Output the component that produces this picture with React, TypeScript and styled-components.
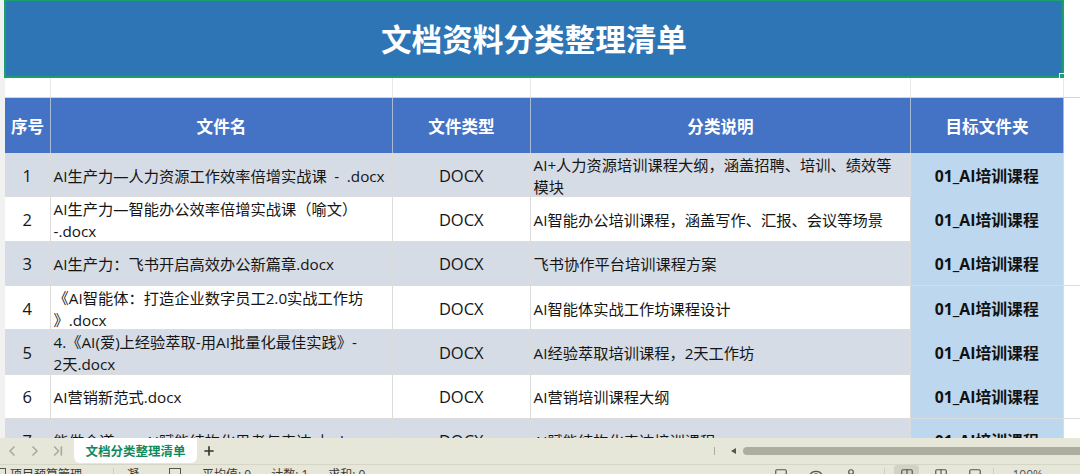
import styled, { createGlobalStyle } from 'styled-components';
import { ChevronLast, ChevronLeft, ChevronRight, Columns2, Eye, Plus, Square, User } from 'lucide-react';

type RowProps = {
  $shade?: boolean;
};
type CellProps = {
  $center?: boolean;
};

const GlobalStyle = createGlobalStyle`
  html, body {
    margin: 0;
    padding: 0;
    background: #fff;
  }
  body {
    font-family: "Open Sans", "Noto Sans CJK SC", sans-serif;
  }
`;

const COLUMNS = '46px 342px 138px 380px 153px 1fr';

const Page = styled.div`
  width: 1080px;
  height: 474px;
  display: flex;
  flex-direction: column;
  overflow: hidden;
`;
const Sheet = styled.div`
  flex: 1;
  min-height: 0;
  overflow: hidden;
  padding-left: 5px;
  background: #f1f1f1;
`;
const TitleRow = styled.div`
  height: 78px;
  margin-left: -1px;
  display: flex;
  background: #fff;
`;
const TitleCell = styled.div`
  position: relative;
  width: 1060px;
  box-sizing: border-box;
  border: 2px solid #18a06e;
  border-top-width: 1.5px;
  background: #2e75b6;
  color: #fff;
  font-size: 30.6px;
  font-weight: 700;
  display: flex;
  align-items: center;
  justify-content: center;
  padding-bottom: 1px;
`;
const Handle = styled.span`
  position: absolute;
  right: -3px;
  bottom: -3px;
  width: 4px;
  height: 4px;
  background: #18a06e;
  border: 1px solid #fff;
`;
const Row = styled.div<RowProps>`
  display: grid;
  grid-template-columns: ${COLUMNS};
  height: 44.35px;
  box-sizing: border-box;
  border-bottom: 1px solid #dcdcdc;
  background: ${({ $shade }) => ($shade ? '#d6dce5' : '#fff')};
`;
const SpacerRow = styled(Row)`
  height: 20px;
  background: #fff;
  border-bottom: 1px solid #d4d4d4;
`;
const HeadRow = styled(Row)`
  height: 55px;
  background: #4472c4;
  border-bottom: 0;
`;
const SpacerCell = styled.div`
  border-right: 1px solid #e8e8e8;
`;
const HeadCell = styled.div`
  display: flex;
  align-items: center;
  justify-content: center;
  color: #fff;
  font-size: 16.6px;
  font-weight: 700;
  border-right: 1.5px solid #a9b9d8;
  white-space: nowrap;
`;
const Cell = styled.div<CellProps>`
  display: flex;
  align-items: center;
  box-sizing: border-box;
  justify-content: ${({ $center }) => ($center ? 'center' : 'flex-start')};
  text-align: ${({ $center }) => ($center ? 'center' : 'left')};
  padding: 1px 3px 0 2.5px;
  color: #151515;
  font-size: 15.25px;
  line-height: 22px;
  border-right: 1px solid #dcdcdc;
`;
const LatinCell = styled(Cell)`
  font-size: 16.5px;
`;
const TargetCell = styled(Cell)`
  background: #bdd7ee;
  font-weight: 700;
  font-size: 15.8px;
  color: #111;
`;
const Blank = styled.div`
  background: #fff;
`;
const TabBar = styled.div`
  position: relative;
  height: 26px;
  flex-shrink: 0;
  display: flex;
  align-items: center;
  background: #e6e7d8;
  border-bottom: 1px solid #d5d6c6;
`;
const NavGroup = styled.div`
  width: 74px;
  flex-shrink: 0;
  box-sizing: border-box;
  display: flex;
  align-items: center;
  padding-left: 4px;
  gap: 7px;
  color: #a9aaa0;
`;
const Tab = styled.div`
  width: 123px;
  height: 25px;
  margin-top: -1px;
  display: flex;
  align-items: center;
  justify-content: center;
  background: #fff;
  border-radius: 0 0 6px 6px;
  color: #0e8a5f;
  font-size: 12.5px;
  font-weight: 700;
`;
const AddTab = styled.div`
  margin-left: 5px;
  display: flex;
  color: #33342f;
`;
const ScrollArea = styled.div`
  margin-left: auto;
  width: 366px;
  display: flex;
  align-items: center;
`;
const TabDivider = styled.span`
  width: 1px;
  height: 8px;
  background: #a9aaa0;
`;
const ScrollLeft = styled.span`
  margin-left: 16px;
  width: 0;
  height: 0;
  border-style: solid;
  border-width: 3px 5px 3px 0;
  border-color: transparent #55564f transparent transparent;
`;
const ScrollThumb = styled.div`
  flex: 1;
  margin-left: 7px;
  height: 8px;
  border-radius: 4px 0 0 4px;
  background: #adaea0;
`;
const StatusBar = styled.div`
  height: 9px;
  flex-shrink: 0;
  overflow: hidden;
  display: flex;
  background: #e6e7d8;
  color: #3a3a36;
  font-size: 12px;
`;
const StatusLeft = styled.div`
  display: flex;
  align-items: flex-start;
  padding-top: 3px;
  flex: 1;
  line-height: 14px;
  white-space: nowrap;
`;
const CheckBox = styled.span`
  width: 9px;
  height: 9px;
  margin-left: -5px;
  margin-right: 4px;
  border: 1px solid #55564f;
`;
const ProjectName = styled.span`
  width: 103px;
`;
const StatusDivider = styled.span`
  width: 1px;
  height: 12px;
  background: #cfd0c0;
`;
const ZoomDivider = styled(StatusDivider)`
  margin: 0 12px 0 6px;
`;
const LockText = styled.span`
  margin-left: 13px;
  width: 29px;
`;
const SumBox = styled.span`
  width: 12px;
  height: 12px;
  margin-left: 13px;
  margin-right: 21px;
  border: 1px solid #55564f;
  box-sizing: border-box;
`;
const StatValue = styled.span`
  margin-right: 20px;
`;
const StatusRight = styled.div`
  display: flex;
  align-items: flex-start;
  padding-top: 3px;
  padding-right: 37px;
  gap: 20px;
  color: #55564f;
`;
const ViewGroup = styled.div`
  display: flex;
  align-items: flex-start;
  gap: 9px;
  margin-left: 9px;
`;
const ViewButton = styled.span<{ $active?: boolean }>`
  width: 25px;
  height: 24px;
  margin-top: -3px;
  padding-top: 3px;
  display: flex;
  justify-content: center;
  border-radius: 3px;
  background: ${({ $active }) => ($active ? '#d2d3c4' : 'transparent')};
`;
const RightGroup = styled.div`
  display: flex;
  align-items: flex-start;
  margin-left: 6px;
`;
const ZoomText = styled.span`
  line-height: 14px;
  margin-left: 6px;
`;

const heads = ['序号', '文件名', '文件类型', '分类说明', '目标文件夹'];
// the \u200b and \u2060 marks keep the line breaks where the sheet has them
const rows = [
  { id: 1, name: 'AI生产力—人力资源工作效率倍增实战课\u2002-\u2002.docx', note: 'AI+人力资源培训课程大纲，涵盖招聘、培训、绩效等模\u2060块' },
  { id: 2, name: 'AI生产力—智能办公效率倍增实战课（喻文）\u200b-.docx', note: 'AI智能办公培训课程，涵盖写作、汇报、会议等场景' },
  { id: 3, name: 'AI生产力：飞书开启高效办公新篇章.docx', note: '飞书协作平台培训课程方案' },
  { id: 4, name: '《AI智能体：打造企业数字员工2.0实战工作坊\u200b》.docx', note: 'AI智能体实战工作坊课程设计' },
  { id: 5, name: '4.《AI(爱)上经验萃取-用AI批量化最佳实践》-\u200b2\u2060天.docx', note: 'AI经验萃取培训课程，2天工作坊' },
  { id: 6, name: 'AI营销新范式.docx', note: 'AI营销培训课程大纲' },
  { id: 7, name: '能做会道——AI赋能结构化思考与表达 上.docx', note: 'AI赋能结构化表达培训课程' },
];

const App: React.FC = () => {
  return (
    <Page>
      <GlobalStyle />
      <Sheet>
        <TitleRow>
          <TitleCell>
            文档资料分类整理清单
            <Handle />
          </TitleCell>
        </TitleRow>
        <SpacerRow>
          {heads.map((item) => {
            return <SpacerCell key={item} />;
          })}
          <Blank />
        </SpacerRow>
        <HeadRow>
          {heads.map((item) => {
            return <HeadCell key={item}>{item}</HeadCell>;
          })}
          <Blank />
        </HeadRow>
        {rows.map((item, index) => {
          return (
            <Row key={item.id} $shade={index % 2 === 0}>
              <LatinCell $center>{item.id}</LatinCell>
              <Cell>{item.name}</Cell>
              <LatinCell $center>DOCX</LatinCell>
              <Cell>{item.note}</Cell>
              <TargetCell $center>01_AI培训课程</TargetCell>
              <Blank />
            </Row>
          );
        })}
      </Sheet>
      <TabBar>
        <NavGroup>
          <ChevronLeft size={16} strokeWidth={2.5} />
          <ChevronRight size={16} strokeWidth={2.5} />
          <ChevronLast size={16} strokeWidth={2.5} />
        </NavGroup>
        <Tab>文档分类整理清单</Tab>
        <AddTab>
          <Plus size={14} strokeWidth={2.8} />
        </AddTab>
        <ScrollArea>
          <TabDivider />
          <ScrollLeft />
          <ScrollThumb />
        </ScrollArea>
      </TabBar>
      <StatusBar>
        <StatusLeft>
          <CheckBox />
          <ProjectName>项目预算管理</ProjectName>
          <StatusDivider />
          <LockText>凝</LockText>
          <SumBox />
          <StatValue>平均值: 0</StatValue>
          <StatValue>计数: 1</StatValue>
          <StatValue>求和: 0</StatValue>
        </StatusLeft>
        <StatusRight>
          <Square size={14} />
          <Eye size={16} />
          <User size={14} />
          <RightGroup>
            <StatusDivider />
            <ViewGroup>
              <ViewButton $active>
                <Columns2 size={14} />
              </ViewButton>
              <ViewButton>
                <Columns2 size={14} />
              </ViewButton>
              <ViewButton>
                <Square size={14} />
              </ViewButton>
            </ViewGroup>
            <ZoomDivider />
            <ZoomText>100%</ZoomText>
          </RightGroup>
        </StatusRight>
      </StatusBar>
    </Page>
  );
};
export default App;
